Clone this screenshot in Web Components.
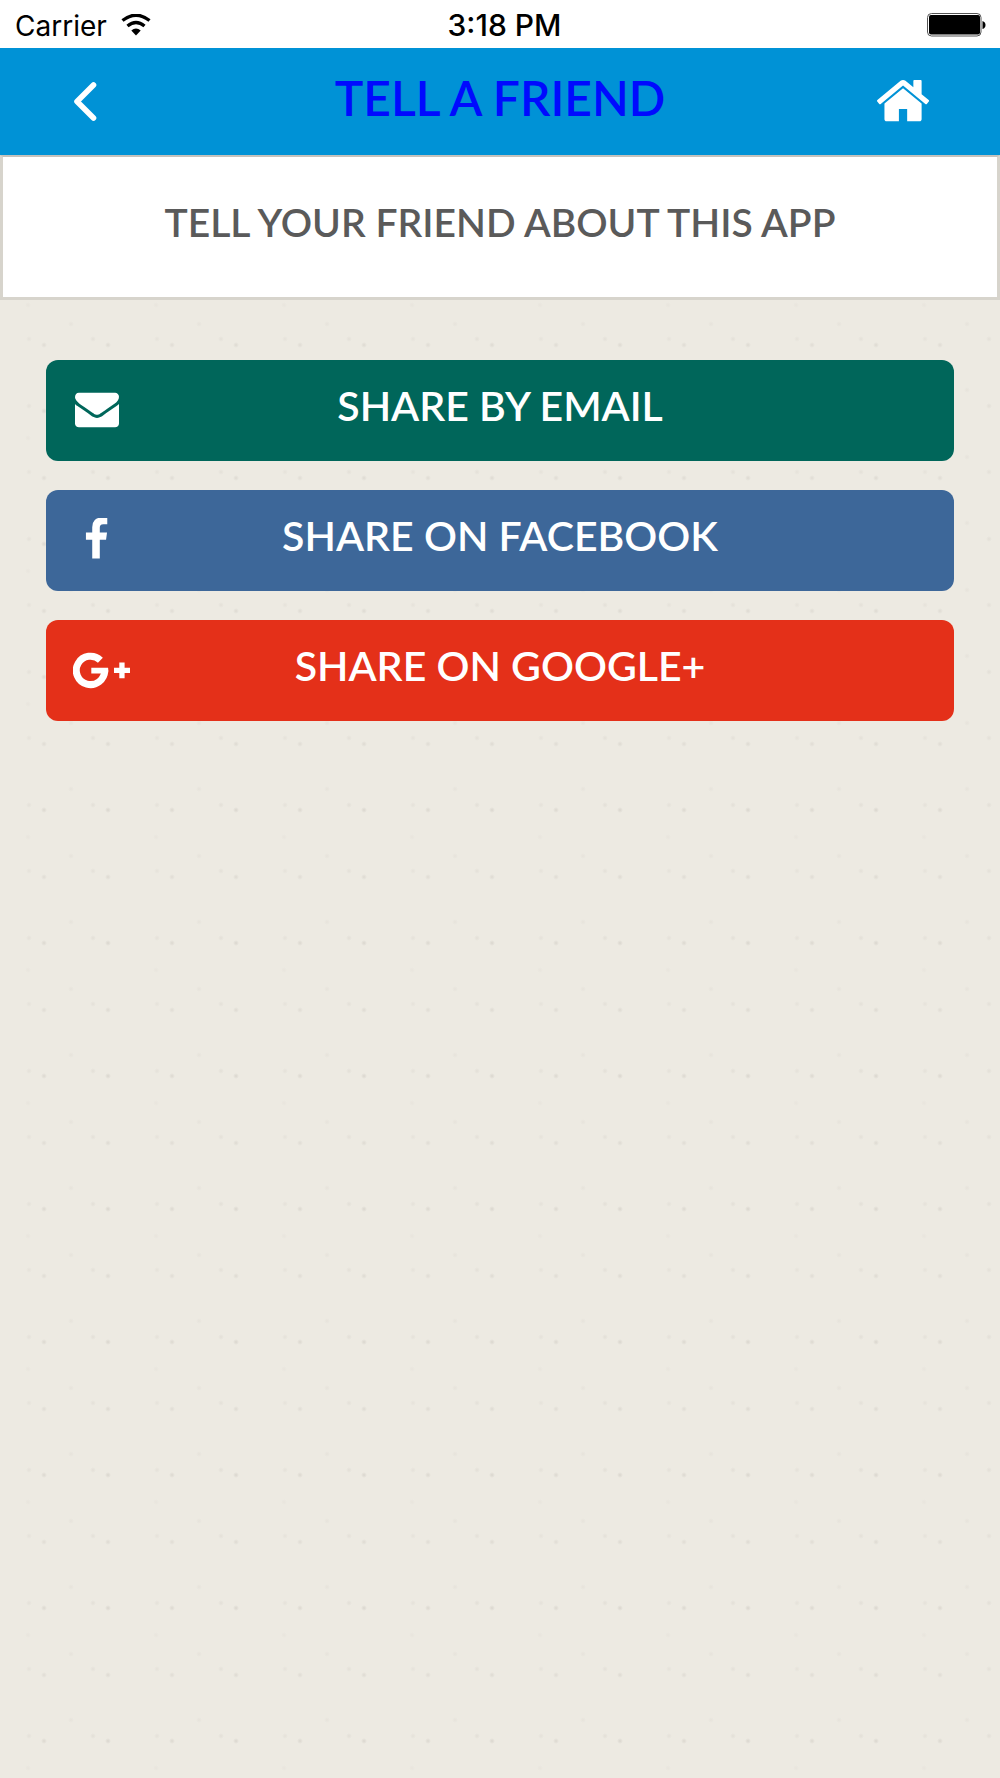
<!DOCTYPE html>
<html lang="en">
<head>
<meta charset="utf-8">
<meta name="viewport" content="width=device-width, initial-scale=1">
<title>Tell a Friend</title>
<style>
  html, body { margin: 0; min-height: 100%; }
  body {
    font-family: Lato, "Liberation Sans", sans-serif;
    background-color: #edeae2;
    /* speckled paper: a faint repeating scatter of grains */
    background-image:
      radial-gradient(circle at 44px 12px, #dbd8d0 0, transparent 3px),
      radial-gradient(circle at 108px 12px, #d9d6ce 0, transparent 3px),
      radial-gradient(circle at 44px 79px, #dfdcd4 0, transparent 3px),
      radial-gradient(circle at 108px 79px, #dddad2 0, transparent 3px),
      radial-gradient(circle at 29px 7px, #e4e1d9 0, transparent 3px),
      radial-gradient(circle at 93px 7px, #e2dfd7 0, transparent 3px),
      radial-gradient(circle at 29px 73px, #e5e2da 0, transparent 3px),
      radial-gradient(circle at 93px 73px, #e3e0d8 0, transparent 3px),
      radial-gradient(circle at 71px 58px, #e6e3db 0, transparent 3px),
      radial-gradient(circle at 71px 124px, #e6e3db 0, transparent 3px),
      radial-gradient(circle at 28px 39px, #e8e5dd 0, transparent 3px);
    background-size: 128px 133px;
  }
</style>
</head>
<body>
<share-page></share-page>
<script>
const define = (name, html) => {
  const template = document.createElement('template');
  template.innerHTML = html;
  customElements.define(name, class extends HTMLElement {
    constructor() {
      super();
      this.attachShadow({ mode: 'open' }).append(template.content.cloneNode(true));
    }
  });
};

define('status-bar', `
  <style>
    :host { display: grid; grid-template-columns: 1fr auto 1fr; align-items: center;
      height: 48px; padding: 0 14px 0 15px; background: #fff; color: #000;
      font: 400 28px/48px Inter, "Liberation Sans", sans-serif; box-sizing: border-box; }
    .left { display: flex; align-items: center; gap: 14px; }
    .time { font-size: 30px; font-weight: 500; padding: 0 0 0 8px; }
    .left span { padding-top: 2px; }
    .battery { justify-self: end; }
    svg { display: block; }
  </style>
  <div class="left"><span>Carrier</span>
    <svg width="30" height="22" viewBox="0 0 30 22" aria-hidden="true">
      <path d="M1.500 6.500Q15-4 28.500 6.500M6.500 12Q15 5.200 23.500 12" fill="none" stroke="#000" stroke-width="3.400"/>
      <path d="M10.300 16.500Q15 12.500 19.700 16.500L15 21.500Z"/>
    </svg>
  </div>
  <span class="time">3:18 PM</span>
  <svg class="battery" width="60" height="24" viewBox="0 0 60 24" aria-hidden="true">
    <rect x="1.500" y=".5" width="53.500" height="22.500" rx="4" fill="#fff" stroke="#555" stroke-width="1"/>
    <rect x="3" y="2" width="51" height="19.500" rx="2"/>
    <path d="M56.500 8q3 1 3 4t-3 4z"/>
  </svg>`);

define('app-header', `
  <style>
    :host { display: grid; grid-template-columns: 1fr auto 1fr; align-items: center;
      height: 107px; padding: 0 70px 2px; background: #0092d6; box-sizing: border-box; }
    button { border: 0; background: none; padding: 0; cursor: pointer; display: flex; }
    .home { justify-self: end; }
    h1 { margin: 0; padding-bottom: 6px; color: #000aff; font-size: 48px; line-height: 60px; font-weight: 600; text-transform: uppercase; }
  </style>
  <button type="button" aria-label="Back"><svg width="28" height="44" viewBox="0 0 28 44">
    <path d="M23.500 6 7 22.500 23.500 39" fill="none" stroke="#fff" stroke-width="5.600" stroke-linecap="round" stroke-linejoin="round"/></svg></button>
  <h1><slot></slot></h1>
  <button class="home" type="button" aria-label="Home"><svg width="54" height="44" viewBox="58 224 1674 1364" fill="#fff">
    <path d="M1472 992v480q0 26-19 45t-45 19h-384v-384h-256v384h-384q-26 0-45-19t-19-45v-480q0-1 .5-3t.5-3l575-474 575 474q1 2 1 6zm223-69l-62 74q-8 9-21 11h-3q-13 0-21-7l-692-577-692 577q-12 8-24 7-13-2-21-11l-62-74q-8-10-7-23.500t11-21.500l719-599q32-26 76-26t76 26l244 204v-195q0-14 9-23t23-9h192q14 0 23 9t9 23v408l219 182q10 8 11 21.500t-7 23.500z"/></svg></button>`);

define('intro-card', `
  <style>
    :host { display: block; box-sizing: border-box; background: #fff; border: 3px solid #d7d4cc; border-top: 2px solid #c4c2bd; padding: 41px 24px 51px; }
    h2 { margin: 0; font-size: 39px; line-height: 48px; font-weight: 600; color: #5a5a5a; text-align: center; text-transform: uppercase; }
  </style>
  <h2><slot></slot></h2>`);

define('share-button', `
  <style>
    :host { display: block; }
    button { display: grid; grid-template-columns: 58px 1fr 58px; align-items: center; width: 100%; height: 101px;
      border: 0; border-radius: 12px; padding: 0 27px 2px; background: var(--tone); color: #fff; cursor: pointer;
      font-family: inherit; font-size: 41px; line-height: 50px; font-weight: 600; }
    .label { text-align: center; padding-bottom: 8px; text-transform: uppercase; }
    ::slotted(svg) { display: block; }
  </style>
  <button type="button"><slot name="icon"></slot><span class="label"><slot></slot></span></button>`);

define('share-page', `
  <style>
    :host { display: block; }
    main { display: flex; flex-direction: column; gap: 29px; padding: 60px 46px; }
    .email { --tone: #00665a; }
    .facebook { --tone: #3d6799; }
    .google { --tone: #e43019; }
  </style>
  <status-bar></status-bar>
  <app-header>Tell a Friend</app-header>
  <intro-card>Tell your friend about this app</intro-card>
  <main>
    <share-button class="email">
      <svg slot="icon" width="58" height="44" viewBox="0 0 58 44" fill="#fff" aria-hidden="true"><path transform="translate(2 -1.500) scale(.02455)" d="M1792 710v794q0 66-47 113t-113 47h-1472q-66 0-113-47t-47-113v-794q44 49 101 87 362 246 497 345 57 42 92.500 65.500t94.500 48 110 24.500h2q51 0 110-24.500t94.500-48 92.500-65.500q170-123 498-345 57-39 100-87zm0-294q0 79-49 151t-122 123q-376 261-468 325-10 7-42.500 31t-54 38.500-52 32.500-57.500 27-50 9h-2q-23 0-50-9t-57.500-27-52-32.500-54-38.500-42.500-31q-91-64-262-182.500t-205-142.500q-62-42-117-115.500t-55-136.500q0-78 41.500-130t118.500-52h1472q65 0 112.500 47t47.500 113z"/></svg>
      Share by Email</share-button>
    <share-button class="facebook">
      <svg slot="icon" width="58" height="44" viewBox="0 0 58 44" fill="#fff" aria-hidden="true"><path transform="translate(1.100 -.5) scale(.0247)" d="M1343 12v264h-157q-86 0-116 36t-30 108v189h293l-39 296h-254v759h-306v-759h-255v-296h255v-218q0-186 104-288.500t277-102.500q147 0 228 12z"/></svg>
      Share on Facebook</share-button>
    <share-button class="google">
      <svg slot="icon" width="58" height="44" viewBox="0 0 58 44" fill="#fff" aria-hidden="true"><path d="M27.400 12.200A14.200 14.200 0 1 0 31.700 22.500" fill="none" stroke="#fff" stroke-width="7"/><path d="M18.300 19.800H35.100Q35.600 22.500 35 25.600H18.300ZM41 19.700h5.300V14.500h5.300v5.200H57v5.300h-5.400v5.200h-5.300v-5.200H41z"/></svg>
      Share on Google+</share-button>
  </main>`);
</script>
</body>
</html>
